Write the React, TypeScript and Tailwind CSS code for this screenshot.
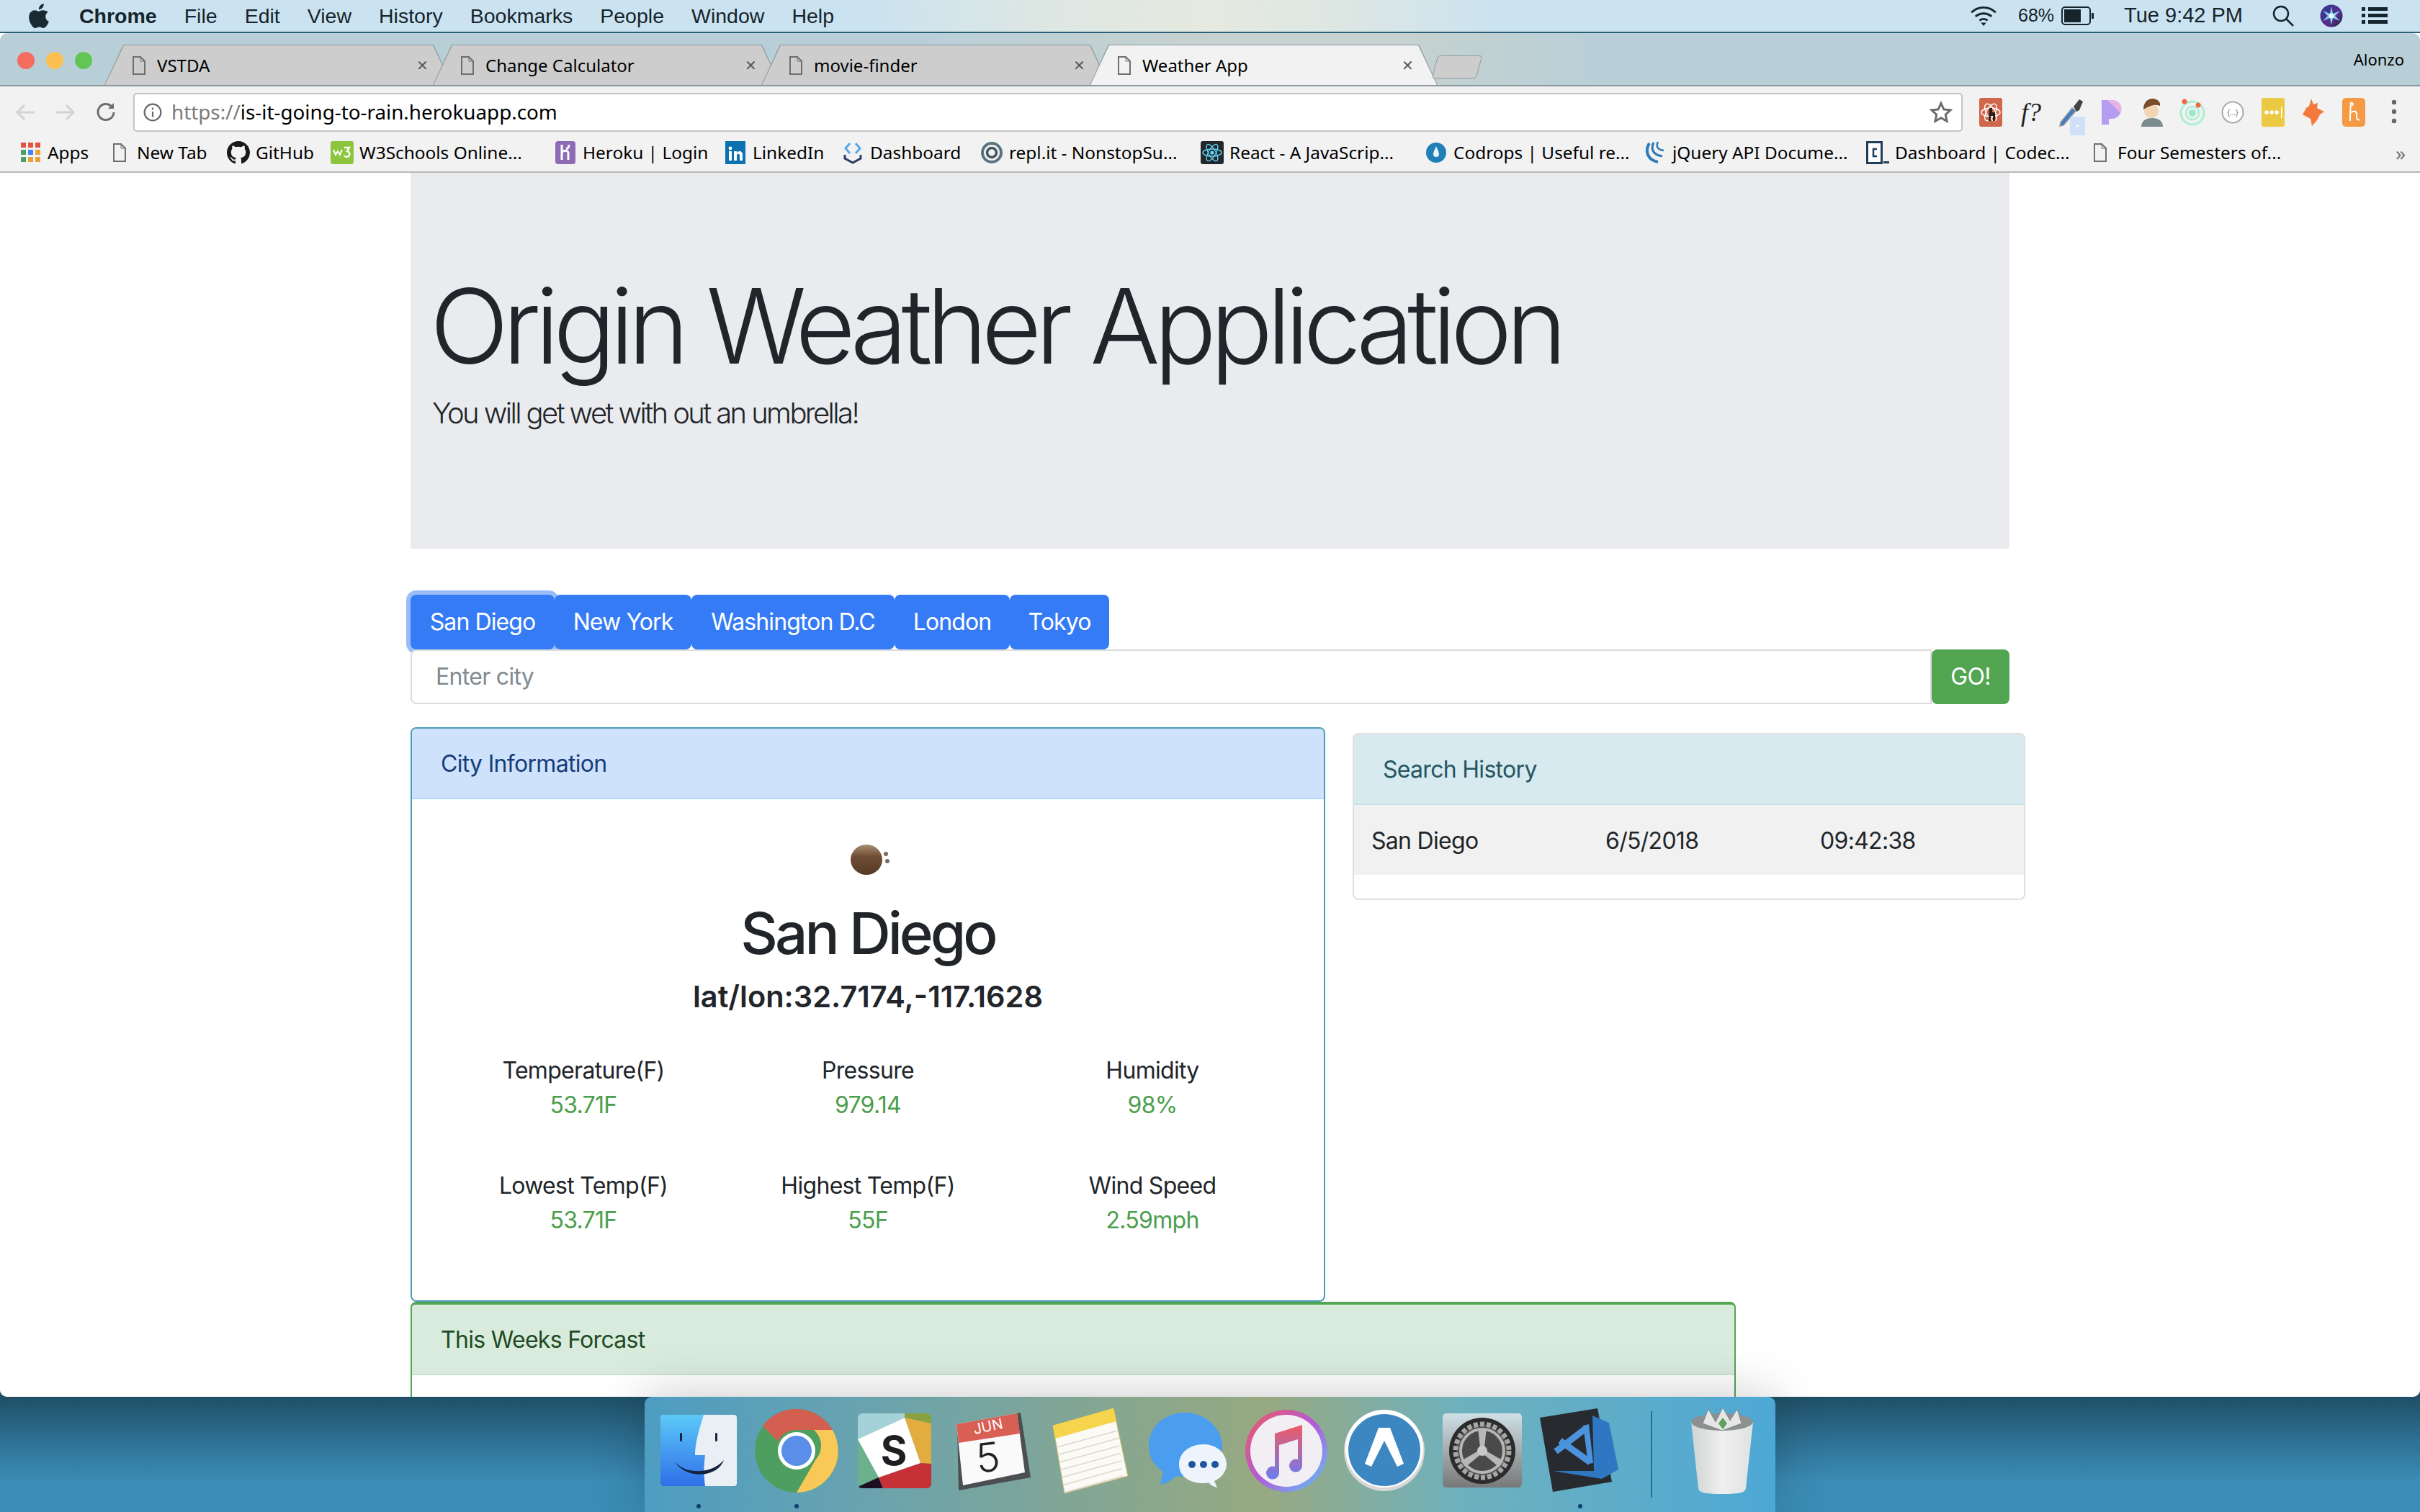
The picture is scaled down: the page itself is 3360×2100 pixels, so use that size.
import type { ReactNode } from "react";

const MENU = ["File", "Edit", "View", "History", "Bookmarks", "People", "Window", "Help"];

const CITIES = [
  { name: "San Diego", width: "w-[200px]", ring: true },
  { name: "New York", width: "w-[190px]", ring: false },
  { name: "Washington D.C", width: "w-[282px]", ring: false },
  { name: "London", width: "w-[160px]", ring: false },
  { name: "Tokyo", width: "w-[138px]", ring: false },
];

const STATS = [
  { label: "Temperature(F)", value: "53.71F" },
  { label: "Pressure", value: "979.14" },
  { label: "Humidity", value: "98%" },
  { label: "Lowest Temp(F)", value: "53.71F" },
  { label: "Highest Temp(F)", value: "55F" },
  { label: "Wind Speed", value: "2.59mph" },
];

function PageIcon() {
  return (
    <svg viewBox="0 0 18 26" className="w-[18px] h-[26px] shrink-0" fill="none" stroke="#6e6e6e" strokeWidth="2">
      <path d="M1 1h10l6 6v18H1z" />
      <path d="M11 1v6h6" strokeWidth="1" />
    </svg>
  );
}

function Tab({ title, active }: { title: string; active?: boolean }) {
  return (
    <div className="relative w-[483px] h-[56px] -ml-[27px] shrink-0 bg-[#8c9a9f] [clip-path:polygon(26px_0,457px_0,483px_100%,0_100%)]">
      <div
        className={`absolute inset-x-[1px] top-[1px] bottom-0 flex items-center pl-[38px] pr-[32px] gap-[16px] [clip-path:polygon(26px_0,455px_0,481px_100%,0_100%)] ${
          active ? "bg-[#f2f2f2]" : "bg-[#cdcdcd]"
        }`}
      >
        <PageIcon />
        <span className="flex-1 text-[24px] text-black">{title}</span>
        <span className="text-[20px] text-[#5a5a5a]">✕</span>
      </div>
    </div>
  );
}

function Bookmark({ icon, label, width }: { icon: ReactNode; label: string; width: string }) {
  return (
    <div className={`flex items-center gap-[8px] shrink-0 ${width}`}>
      <span className="w-[32px] h-[32px] flex items-center justify-center shrink-0">{icon}</span>
      <span className="text-[24.4px] whitespace-nowrap text-black">{label}</span>
    </div>
  );
}

const AppsIcon = (
  <svg viewBox="0 0 27 27" className="w-[27px] h-[27px]">
    {[0, 10, 20].map((y, r) =>
      [0, 10, 20].map((x, c) => (
        <rect
          key={`${r}${c}`}
          x={x}
          y={y}
          width="7"
          height="7"
          fill={r === 0 ? "#e5503f" : r === 1 ? (c === 0 ? "#4f9e63" : c === 1 ? "#4285f4" : "#e9a23b") : c === 0 ? "#4f9e63" : "#e9a23b"}
        />
      ))
    )}
  </svg>
);

const GithubIcon = (
  <svg viewBox="0 0 16 16" className="w-[32px] h-[32px]" fill="#1a1a1a">
    <path d="M8 0C3.58 0 0 3.58 0 8c0 3.54 2.29 6.53 5.47 7.59.4.07.55-.17.55-.38 0-.19-.01-.82-.01-1.49-2.01.37-2.53-.49-2.69-.94-.09-.23-.48-.94-.82-1.13-.28-.15-.68-.52-.01-.53.63-.01 1.08.58 1.23.82.72 1.21 1.87.87 2.33.66.07-.52.28-.87.51-1.07-1.78-.2-3.64-.89-3.64-3.95 0-.87.31-1.59.82-2.15-.08-.2-.36-1.02.08-2.12 0 0 .67-.21 2.2.82.64-.18 1.32-.27 2-.27s1.36.09 2 .27c1.53-1.04 2.2-.82 2.2-.82.44 1.1.16 1.92.08 2.12.51.56.82 1.27.82 2.15 0 3.07-1.87 3.75-3.65 3.95.29.25.54.73.54 1.48 0 1.07-.01 1.93-.01 2.2 0 .21.15.46.55.38A8.01 8.01 0 0 0 16 8c0-4.42-3.58-8-8-8z" />
  </svg>
);

const W3Icon = (
  <svg viewBox="0 0 32 32" className="w-[32px] h-[32px]">
    <rect width="32" height="32" rx="3" fill="#8cc63f" />
    <path d="M4 12l3 7 3-5 3 5 3-7" fill="none" stroke="#fff" strokeWidth="2" />
    <path d="M19 9h7l-3 5a4 4 0 1 1-4 6" fill="none" stroke="#fff" strokeWidth="2.4" />
  </svg>
);

const HerokuIcon = (
  <svg viewBox="0 0 28 32" className="w-[28px] h-[32px]">
    <rect width="28" height="32" rx="4" fill="#8d6cb5" />
    <path d="M9 5v21M9 15c5-3 9-2 9 2v9M19 5c0 3-1 5-4 6" fill="none" stroke="#fff" strokeWidth="3" />
  </svg>
);

const LinkedinIcon = (
  <svg viewBox="0 0 28 32" className="w-[28px] h-[32px]">
    <rect width="28" height="32" fill="#0a72b1" />
    <circle cx="7" cy="10" r="2.4" fill="#fff" />
    <path d="M5 14h4v13H5zM12 14h4v2c2-3 8-3 8 3v8h-4v-7c0-3-4-3-4 0v7h-4z" fill="#fff" />
  </svg>
);

const DashboardIcon = (
  <svg viewBox="0 0 30 32" className="w-[30px] h-[32px]" fill="none" strokeWidth="3">
    <path d="M11 3L5 10l6 7M19 3l6 7-6 7" stroke="#5aa9e6" />
    <path d="M4 19v5l11 6 11-6v-5" stroke="#2c3e66" />
  </svg>
);

const ReplIcon = (
  <svg viewBox="0 0 30 32" className="w-[30px] h-[32px]" fill="none">
    <circle cx="15" cy="16" r="13" stroke="#5d7480" strokeWidth="4" />
    <circle cx="15" cy="16" r="6.5" stroke="#3f5560" strokeWidth="3.5" />
  </svg>
);

const ReactIcon = (
  <svg viewBox="0 0 32 32" className="w-[32px] h-[32px]" fill="none">
    <rect width="32" height="32" rx="3" fill="#23272b" />
    <circle cx="16" cy="16" r="2.6" fill="#61dafb" />
    <g stroke="#61dafb" strokeWidth="1.3">
      <ellipse cx="16" cy="16" rx="13" ry="5" />
      <ellipse cx="16" cy="16" rx="13" ry="5" transform="rotate(60 16 16)" />
      <ellipse cx="16" cy="16" rx="13" ry="5" transform="rotate(120 16 16)" />
    </g>
  </svg>
);

const CodropsIcon = (
  <svg viewBox="0 0 28 32" className="w-[28px] h-[32px]">
    <circle cx="14" cy="16" r="14" fill="#1f80b5" />
    <path d="M14 7c-2 5-4 8-4 11a4 4 0 0 0 8 0c0-3-2-6-4-11z" fill="#fff" opacity="0.9" />
  </svg>
);

const JqueryIcon = (
  <svg viewBox="0 0 32 32" className="w-[32px] h-[32px]" fill="none" stroke="#2f7ab8">
    <path d="M8 3C2 12 4 26 20 29" strokeWidth="4" />
    <path d="M14 2c-4 8-2 17 12 19" strokeWidth="3.2" />
    <path d="M20 1c-3 6-1 11 8 12" strokeWidth="2.6" />
  </svg>
);

const CodecademyIcon = (
  <svg viewBox="0 0 32 32" className="w-[32px] h-[32px]">
    <rect x="1.5" y="1.5" width="20" height="29" fill="#fff" stroke="#1f3f5b" strokeWidth="3" />
    <path d="M15 11h-5v10h5" fill="none" stroke="#1f3f5b" strokeWidth="2.5" />
    <rect x="24" y="28" width="8" height="3" fill="#1f3f5b" />
  </svg>
);

const BOOKMARKS = [
  { icon: AppsIcon, label: "Apps", width: "w-[124px]" },
  { icon: <PageIcon />, label: "New Tab", width: "w-[165px]" },
  { icon: GithubIcon, label: "GitHub", width: "w-[144px]" },
  { icon: W3Icon, label: "W3Schools Online...", width: "w-[310px]" },
  { icon: HerokuIcon, label: "Heroku | Login", width: "w-[236px]" },
  { icon: LinkedinIcon, label: "LinkedIn", width: "w-[163px]" },
  { icon: DashboardIcon, label: "Dashboard", width: "w-[193px]" },
  { icon: ReplIcon, label: "repl.it - NonstopSu...", width: "w-[306px]" },
  { icon: ReactIcon, label: "React - A JavaScrip...", width: "w-[311px]" },
  { icon: CodropsIcon, label: "Codrops | Useful re...", width: "w-[304px]" },
  { icon: JqueryIcon, label: "jQuery API Docume...", width: "w-[309px]" },
  { icon: CodecademyIcon, label: "Dashboard | Codec...", width: "w-[309px]" },
  { icon: <PageIcon />, label: "Four Semesters of...", width: "w-[426px]" },
];

function Ext({ children }: { children: ReactNode }) {
  return <div className="w-[56px] h-[60px] shrink-0 flex items-center justify-center">{children}</div>;
}

function ExtensionIcons() {
  return (
    <div className="flex items-center ml-[11px]">
      <Ext>
        <svg viewBox="0 0 32 40" className="w-[32px] h-[40px]">
          <rect width="32" height="40" rx="3" fill="#d0664a" />
          <g fill="none" stroke="#fff" strokeWidth="1.4">
            <ellipse cx="16" cy="20" rx="13" ry="6" />
            <ellipse cx="16" cy="20" rx="13" ry="6" transform="rotate(60 16 20)" />
            <ellipse cx="16" cy="20" rx="13" ry="6" transform="rotate(120 16 20)" />
          </g>
          <path d="M14 14h4v6h4v12h-3v-7h-3v7h-3z" fill="#2a211d" />
        </svg>
      </Ext>
      <Ext>
        <span className="text-[36px] italic leading-none text-[#222] [font-family:'Liberation_Serif',serif]">f?</span>
      </Ext>
      <Ext>
        <svg viewBox="0 0 38 54" className="w-[38px] h-[54px] mt-[10px]">
          <path d="M4 36l16-20 5 4-17 20-5 1z" fill="#3f7fc0" stroke="#999" strokeWidth="1.5" />
          <path d="M22 14l8-10 5 3-5 12-4 2z" fill="#444" />
          <rect x="17" y="28" width="21" height="26" rx="2" fill="#cfe0f7" />
          <rect x="26" y="39" width="3" height="3" fill="#fff" />
        </svg>
      </Ext>
      <Ext>
        <svg viewBox="0 0 28 34" className="w-[28px] h-[34px]">
          <path d="M0 0h14a13 13 0 0 1 0 26H10v8H0z" fill="#b49cf0" />
          <path d="M8 0h8a12 12 0 0 1 10 18L8 0z" fill="#e6b3e2" />
        </svg>
      </Ext>
      <Ext>
        <svg viewBox="0 0 34 40" className="w-[34px] h-[40px]">
          <path d="M2 40c0-8 6-12 15-12s15 4 15 12z" fill="#7c8c8e" />
          <circle cx="16" cy="18" r="10" fill="#f3d4b4" />
          <path d="M5 16C5 5 12 0 19 1c7 1 10 6 9 10-8-3-14 0-23 5z" fill="#7a4c2c" />
        </svg>
      </Ext>
      <Ext>
        <svg viewBox="0 0 36 40" className="w-[36px] h-[40px]" fill="none">
          <circle cx="18" cy="21" r="16" stroke="#a8f0d4" strokeWidth="3" />
          <circle cx="18" cy="21" r="9" stroke="#a8f0d4" strokeWidth="2.5" />
          <circle cx="18" cy="21" r="5" fill="#9ce8c8" />
          <circle cx="7" cy="5" r="3.5" fill="#f0683e" />
          <circle cx="26" cy="10" r="3.5" fill="#f0683e" />
        </svg>
      </Ext>
      <Ext>
        <svg viewBox="0 0 32 40" className="w-[32px] h-[40px]">
          <circle cx="16" cy="20" r="14.5" fill="#fff" stroke="#aaa" strokeWidth="2" />
          <text x="16" y="24" textAnchor="middle" fontSize="10" fill="#777">{"{...}"}</text>
        </svg>
      </Ext>
      <Ext>
        <svg viewBox="0 0 32 40" className="w-[32px] h-[40px]">
          <rect width="32" height="40" rx="3" fill="#ecc943" />
          <circle cx="7" cy="20" r="2.7" fill="#fff" />
          <circle cx="14" cy="20" r="2.7" fill="#fff" />
          <circle cx="21" cy="20" r="2.7" fill="#fff" />
          <rect x="27" y="12" width="1.6" height="16" fill="#fff" />
        </svg>
      </Ext>
      <Ext>
        <svg viewBox="0 0 32 38" className="w-[32px] h-[38px]">
          <path d="M13 0l3 8 6-2-1 7 10 5-6 4-4 8-7 8-2-10-11-6 5-9 4-3z" fill="#f47a3c" />
        </svg>
      </Ext>
      <Ext>
        <svg viewBox="0 0 32 40" className="w-[32px] h-[40px]">
          <rect width="32" height="40" rx="5" fill="#f49a44" />
          <path d="M12 8c-1 8-1 16-1 24M11 21c3-3 9-4 9 1v5c0 3 2 4 4 3M11 8c2-3 5 0 3 3" fill="none" stroke="#fff" strokeWidth="2" />
        </svg>
      </Ext>
      <Ext>
        <svg viewBox="0 0 8 40" className="w-[8px] h-[40px]" fill="#666">
          <circle cx="4" cy="6" r="3.2" />
          <circle cx="4" cy="19" r="3.2" />
          <circle cx="4" cy="32" r="3.2" />
        </svg>
      </Ext>
    </div>
  );
}

function Finder() {
  return (
    <svg viewBox="0 0 106 100" className="w-[106px] h-[100px]">
      <defs>
        <linearGradient id="finderL" x1="0" y1="0" x2="0" y2="1">
          <stop offset="0" stopColor="#5cc9f8" />
          <stop offset="1" stopColor="#2f6fe8" />
        </linearGradient>
      </defs>
      <rect width="106" height="99" rx="4" fill="#e9eff5" />
      <path d="M4 0h56c-6 20-12 38-12 56h14c-2 14 -2 28 0 43H4a4 4 0 0 1-4-4V4a4 4 0 0 1 4-4z" fill="url(#finderL)" />
      <rect x="27" y="25" width="3" height="12" rx="1.5" fill="#14233f" />
      <rect x="76" y="25" width="3" height="12" rx="1.5" fill="#14233f" />
      <path d="M20 65c14 18 50 18 68-2-10 26-54 26-68 2z" fill="#14233f" />
    </svg>
  );
}

function ChromeDock() {
  return (
    <svg viewBox="0 0 118 118" className="w-[118px] h-[118px]">
      <circle cx="59" cy="59" r="58" fill="#4e9e5f" />
      <path d="M59 1a58 58 0 0 1 50 29H59a29 29 0 0 0-26 16L12 24A58 58 0 0 1 59 1z" fill="#d25f4f" />
      <path d="M109 30a58 58 0 0 1-50 87l26-45a29 29 0 0 0-2-42z" fill="#f8c957" />
      <circle cx="59" cy="59" r="26" fill="#fff" />
      <circle cx="59" cy="59" r="21" fill="#5a8ee8" />
    </svg>
  );
}

function Slack() {
  return (
    <svg viewBox="0 0 102 104" className="w-[102px] h-[104px]">
      <defs>
        <clipPath id="slackBox">
          <rect width="102" height="104" rx="6" />
        </clipPath>
      </defs>
      <g clipPath="url(#slackBox)">
        <path d="M0 0h65v6L0 36z" fill="#a4d2d8" />
        <path d="M65 0h37v14L65 6z" fill="#8aa13f" />
        <path d="M65 6l37 8v56l-15-1z" fill="#e2ad3e" />
        <path d="M0 36l29 53L0 102z" fill="#6ab18c" />
        <path d="M0 102l29-13 6 15H0z" fill="#1c0f24" />
        <path d="M29 89l58-20 15 1v34H35z" fill="#c63138" />
        <path d="M0 36L65 6l22 63-58 20z" fill="#fff" />
      </g>
      <text x="50" y="72" textAnchor="middle" fontSize="56" fontWeight="700" fill="#1e1f22" fontFamily="Inter, sans-serif">S</text>
    </svg>
  );
}

function Calendar() {
  return (
    <div className="relative w-[106px] h-[110px]">
      <svg viewBox="0 0 106 110" className="absolute inset-0 w-full h-full">
        <path d="M4 20l88-18 14 90-100 18z" fill="#4b4f52" />
        <path d="M3 18l84-15 11 82-86 18z" fill="#fafafa" />
        <path d="M3 18l84-15 4 28-85 13z" fill="#d95f55" />
      </svg>
      <span className="absolute left-[26px] top-[6px] text-[20px] text-white -rotate-12">JUN</span>
      <span className="absolute left-[30px] top-[36px] text-[56px] leading-none text-[#222] font-light -rotate-6">5</span>
    </div>
  );
}

function Notes() {
  return (
    <svg viewBox="0 0 104 118" className="w-[104px] h-[118px]">
      <path d="M0 24L84 0l20 94-88 24z" fill="#fbfaf5" stroke="#d0b76a" strokeWidth="1" />
      <path d="M0 24L84 0l4 18L3 42z" fill="#f6d44c" />
      {[0, 1, 2, 3, 4, 5, 6].map((i) => (
        <path key={i} d={`M${5 + i * 1.8} ${54 + i * 10.5}L${90 + i * 1.2} ${31 + i * 10.5}`} stroke="#d8d8d0" strokeWidth="1.5" />
      ))}
    </svg>
  );
}

function Messages() {
  return (
    <svg viewBox="0 0 110 106" className="w-[110px] h-[106px]">
      <path d="M50 0C22 0 0 20 0 46c0 16 8 28 20 36l-4 18c8-2 16-6 22-12 6 1 8 1 14 1 26 0 50-20 50-43S80 0 50 0z" fill="#4b9df0" />
      <path d="M76 44c-20 0-34 12-34 28s14 26 34 26c2 0 5 0 7-1 3 4 8 6 12 7l-4-9c10-5 17-13 17-23 0-16-14-28-32-28z" fill="#eef4fb" />
      <circle cx="60" cy="72" r="5" fill="#20559f" />
      <circle cx="76" cy="72" r="5" fill="#20559f" />
      <circle cx="92" cy="72" r="5" fill="#20559f" />
    </svg>
  );
}

function ITunes() {
  return (
    <svg viewBox="0 0 116 116" className="w-[116px] h-[116px]">
      <defs>
        <linearGradient id="itunesRing" x1="0" y1="0" x2="1" y2="1">
          <stop offset="0" stopColor="#f05a5a" />
          <stop offset="0.5" stopColor="#b25ad8" />
          <stop offset="1" stopColor="#5ac8fa" />
        </linearGradient>
        <linearGradient id="itunesNote" x1="0" y1="0" x2="0" y2="1">
          <stop offset="0" stopColor="#ef5a62" />
          <stop offset="1" stopColor="#6d7cf3" />
        </linearGradient>
      </defs>
      <circle cx="58" cy="58" r="57" fill="url(#itunesRing)" />
      <circle cx="58" cy="58" r="50" fill="#f1eef4" />
      <path d="M42 34l38-12v56a9 9 0 1 1-6-8V42L48 50v38a9 9 0 1 1-6-8z" fill="url(#itunesNote)" />
    </svg>
  );
}

function Expo() {
  return (
    <svg viewBox="0 0 112 114" className="w-[112px] h-[114px]">
      <circle cx="56" cy="57" r="56" fill="#d7d7d7" />
      <circle cx="56" cy="54" r="54" fill="#fff" />
      <circle cx="56" cy="56" r="50" fill="#3c87c2" />
      <path d="M48 25h16l19 50-9 4-18-36-18 36-9-4z" fill="#fff" />
    </svg>
  );
}

function Settings() {
  return (
    <svg viewBox="0 0 110 104" className="w-[110px] h-[104px]">
      <defs>
        <linearGradient id="prefBg" x1="0" y1="0" x2="0" y2="1">
          <stop offset="0" stopColor="#cfe0e6" />
          <stop offset="1" stopColor="#787878" />
        </linearGradient>
      </defs>
      <rect width="110" height="103" rx="5" fill="url(#prefBg)" />
      <circle cx="55" cy="52" r="46" fill="#2b2b2b" />
      <circle cx="55" cy="52" r="37" fill="#4a4a4a" stroke="#a6a6a6" strokeWidth="7" strokeDasharray="6 3" />
      <circle cx="55" cy="52" r="30" fill="none" stroke="#b5b5b5" strokeWidth="4" />
      <path d="M55 52L52 24h6zM55 52l26 15-3 4zM55 52L29 67l3 4z" stroke="#b8b8b8" strokeWidth="5" fill="#b8b8b8" />
      <circle cx="55" cy="52" r="7" fill="#c9c9c9" />
    </svg>
  );
}

function VSCode() {
  return (
    <svg viewBox="0 0 112 118" className="w-[112px] h-[118px]">
      <path d="M0 13L80 0l20 102-82 14z" fill="#272a2e" />
      <path d="M73 10l23 10 13 65-23 13-68-11 57 0z" fill="#2f77c2" />
      <path d="M65 27L22 60M28 45l42 30" fill="none" stroke="#4c93dd" strokeWidth="9" />
      <path d="M60 24l8-2 6 54-7 1z" fill="#4c93dd" />
    </svg>
  );
}

function Trash() {
  return (
    <svg viewBox="0 0 94 120" className="w-[94px] h-[120px]">
      <defs>
        <linearGradient id="trashBody" x1="0" y1="0" x2="1" y2="0">
          <stop offset="0" stopColor="#cfd3d4" />
          <stop offset="0.5" stopColor="#f0f0ee" />
          <stop offset="1" stopColor="#dfe2e2" />
        </linearGradient>
      </defs>
      <path d="M4 20h86l-10 92c-1 6-8 8-33 8s-32-2-33-8z" fill="url(#trashBody)" />
      <ellipse cx="47" cy="20" rx="43" ry="12" fill="#8b9091" />
      <path d="M20 22l8-20 10 18 10-20 10 18 10-16 6 20-27 10z" fill="#e6e6e6" stroke="#888" strokeWidth="1" />
      <path d="M42 22l6-8 6 8-6 8z" fill="#5e9e5e" />
    </svg>
  );
}

const DOCK = [
  { icon: <Finder />, running: true },
  { icon: <ChromeDock />, running: true },
  { icon: <Slack />, running: false },
  { icon: <Calendar />, running: false },
  { icon: <Notes />, running: false },
  { icon: <Messages />, running: false },
  { icon: <ITunes />, running: false },
  { icon: <Expo />, running: false },
  { icon: <Settings />, running: false },
  { icon: <VSCode />, running: true },
];

function DockItem({ icon, running }: { icon: ReactNode; running: boolean }) {
  return (
    <div className="w-[136px] h-full flex flex-col items-center shrink-0">
      <div className="h-[149px] flex items-center justify-center">{icon}</div>
      {running && <span className="w-[6px] h-[6px] rounded-full bg-[#0c3f6b]" />}
    </div>
  );
}

function Card({
  title,
  frame,
  head,
  className,
  children,
}: {
  title: string;
  frame: string;
  head: string;
  className: string;
  children?: ReactNode;
}) {
  return (
    <div className={`rounded-[8px] border-[2px] overflow-hidden bg-white ${frame} ${className}`}>
      <div className={`h-[98px] flex items-center px-[40px] pt-[2px] border-b-[2px] text-[32px] ${head}`}>{title}</div>
      {children}
    </div>
  );
}

export default function App() {
  return (
    <div className="w-[3360px] h-[2100px] overflow-hidden flex flex-col bg-[linear-gradient(180deg,#1f4f66_92.4%,#2f7397_95.5%,#3b8cb6_98%)] text-[#212529] [font-family:Inter,'Liberation_Sans',sans-serif]">
      {/* menu bar */}
      <div className="h-[46px] shrink-0 flex items-center justify-between border-b-[2px] border-[#2a6079] bg-[linear-gradient(90deg,#cbe3f0_0%,#cbe3f0_36%,#dbe6e4_42%,#e6eae0_50%,#dbe6e4_56%,#cbe3f0_62%,#cbe3f0_100%)] text-[28.5px] text-[#16242c] [font-family:'Liberation_Sans',sans-serif]">
        <div className="flex items-center">
          <svg viewBox="0 0 814 1000" className="w-[28px] h-[34px] ml-[40px] mr-[42px]" fill="#1a2a33">
            <path d="M788 341c-6 4-108 62-108 190 0 148 130 201 134 202-1 3-21 72-69 142-43 62-88 124-156 124s-86-40-164-40c-77 0-104 41-167 41s-106-57-156-127C44 791 0 670 0 555c0-185 120-283 239-283 63 0 115 41 155 41 38 0 97-44 169-44 27 0 125 3 225 72zM554 168c31-37 53-88 53-139 0-7-1-14-2-20-51 2-111 34-148 76-29 32-55 83-55 135 0 8 1 15 2 18 3 0 8 1 13 1 45 0 103-31 137-71z" />
          </svg>
          <span className="font-bold mr-[38px]">Chrome</span>
          <div className="flex gap-[38px]">
            {MENU.map((m) => (
              <span key={m}>{m}</span>
            ))}
          </div>
        </div>
        <div className="flex items-center pr-[45px]">
          <svg viewBox="0 0 40 32" className="w-[40px] h-[30px]" fill="none" stroke="#16242c" strokeWidth="3">
            <path d="M2 11c10-10 26-10 36 0M8 17c7-6 17-6 24 0M14 23c3-3 9-3 12 0" />
            <path d="M20 31l-4-5h8z" fill="#16242c" stroke="none" />
          </svg>
          <span className="ml-[28px] text-[25px]">68%</span>
          <svg viewBox="0 0 46 26" className="w-[46px] h-[26px] ml-[10px]">
            <rect x="1" y="1" width="39" height="24" rx="4" fill="none" stroke="#16242c" strokeWidth="2" />
            <rect x="4" y="4" width="23" height="18" fill="#16242c" />
            <rect x="42" y="9" width="3" height="8" fill="#16242c" />
          </svg>
          <span className="ml-[41px] text-[29px]">Tue 9:42 PM</span>
          <svg viewBox="0 0 30 30" className="w-[30px] h-[30px] ml-[41px]" fill="none" stroke="#16242c" strokeWidth="2.5">
            <circle cx="12" cy="12" r="10" />
            <path d="M19 19l10 10" />
          </svg>
          <svg viewBox="0 0 32 32" className="w-[32px] h-[32px] ml-[36px]">
            <defs>
              <linearGradient id="siri" x1="0" y1="0" x2="1" y2="1">
                <stop offset="0" stopColor="#2a3b8f" />
                <stop offset="0.6" stopColor="#5a2c8c" />
                <stop offset="1" stopColor="#1d1f4a" />
              </linearGradient>
            </defs>
            <circle cx="16" cy="16" r="15.5" fill="url(#siri)" />
            <path d="M16 3l2 10 10-4-7 7 7 7-10-4-2 10-2-10-10 4 7-7-7-7 10 4z" fill="#7fd4ea" />
            <circle cx="16" cy="16" r="3.5" fill="#e9f5fb" />
          </svg>
          <svg viewBox="0 0 36 28" className="w-[36px] h-[28px] ml-[26px]" fill="#16242c">
            <rect x="0" y="2" width="5" height="5" />
            <rect x="9" y="2" width="27" height="5" />
            <rect x="0" y="11" width="5" height="5" />
            <rect x="9" y="11" width="27" height="5" />
            <rect x="0" y="20" width="5" height="5" />
            <rect x="9" y="20" width="27" height="5" />
          </svg>
        </div>
      </div>

      {/* browser window */}
      <div className="h-[1894px] shrink-0 rounded-b-[10px] overflow-hidden flex flex-col bg-white [font-family:'Noto_Sans',sans-serif]">
        <div className="h-[74px] shrink-0 flex items-end border-b-[2px] border-[#8c9a9f] rounded-t-[10px] bg-[linear-gradient(90deg,#b9cfd8_0%,#b9cfd8_38%,#c6d2cf_50%,#c6d2cf_58%,#b9cfd8_66%,#b9cfd8_100%)]">
          <div className="flex items-center gap-[16px] pl-[24px] w-[172px] shrink-0 self-center mt-[4px]">
            <span className="w-[24px] h-[24px] rounded-full bg-[#f46c60] shrink-0" />
            <span className="w-[24px] h-[24px] rounded-full bg-[#fbc04f] shrink-0" />
            <span className="w-[24px] h-[24px] rounded-full bg-[#62c654] shrink-0" />
          </div>
          <Tab title="VSTDA" />
          <Tab title="Change Calculator" />
          <Tab title="movie-finder" />
          <Tab title="Weather App" active />
          <div className="w-[62px] h-[32px] mb-[9px] -ml-[4px] rounded-[4px] border border-[#8c9a9f] bg-[#cdcdcd] -skew-x-[15deg]" />
          <span className="ml-auto self-center pr-[22px] text-[22px] text-black">Alonzo</span>
        </div>

        <div className="h-[72px] shrink-0 flex items-center bg-[#f2f2f2]">
          <div className="flex items-center gap-[26px] w-[185px] shrink-0 pl-[20px]">
            <svg viewBox="0 0 30 30" className="w-[30px] h-[30px]" fill="none" stroke="#d2d2d2" strokeWidth="3">
              <path d="M28 15H4M14 5L4 15l10 10" />
            </svg>
            <svg viewBox="0 0 30 30" className="w-[30px] h-[30px]" fill="none" stroke="#d2d2d2" strokeWidth="3">
              <path d="M2 15h24M16 5l10 10-10 10" />
            </svg>
            <svg viewBox="0 0 30 30" className="w-[30px] h-[30px]" fill="none" stroke="#6e6e6e" strokeWidth="3">
              <path d="M26 15a11 11 0 1 1-3-8" />
              <path d="M26 2v8h-8" fill="#6e6e6e" stroke="none" />
            </svg>
          </div>
          <div className="w-[2540px] h-[54px] shrink-0 flex items-center rounded-[5px] border-[2px] border-[#c4c4c4] bg-white pl-[12px] pr-[12px]">
            <svg viewBox="0 0 24 24" className="w-[26px] h-[26px]" fill="none" stroke="#666" strokeWidth="2">
              <circle cx="12" cy="12" r="10.5" />
              <path d="M12 11v7M12 6v2.5" />
            </svg>
            <span className="ml-[13px] text-[27.8px] text-[#7a7a7a]">https://</span>
            <span className="text-[27.8px] text-black">is-it-going-to-rain.herokuapp.com</span>
            <svg viewBox="0 0 24 24" className="w-[32px] h-[32px] ml-auto" fill="none" stroke="#6a6a6a" strokeWidth="2.2">
              <path d="M12 2.5l2.9 6.4 6.9.8-5.1 4.7 1.4 6.9-6.1-3.5-6.1 3.5 1.4-6.9-5.1-4.7 6.9-.8z" />
            </svg>
          </div>
          <ExtensionIcons />
        </div>

        <div className="h-[48px] shrink-0 flex items-center pl-[26px] pb-[6px] border-b-[2px] border-[#b8b8b8] bg-[#f2f2f2]">
          {BOOKMARKS.map((b) => (
            <Bookmark key={b.label} icon={b.icon} label={b.label} width={b.width} />
          ))}
          <span className="text-[28px] leading-none text-[#777]">»</span>
        </div>

        {/* page */}
        <div className="flex-1 min-h-0 pl-[570px] bg-white tracking-[-0.7px] [font-family:Inter,'Liberation_Sans',sans-serif]">
          <div className="w-[2220px] h-[522px] flex flex-col justify-center pl-[27px] pb-[31px] bg-[#eaebef]">
            <h1 className="text-[144px] font-light leading-[1.2] tracking-[-8.3px] text-[#212529] mb-[4px]">Origin Weather Application</h1>
            <p className="text-[40px] font-light leading-[1.5] tracking-[-2.6px] pl-[3px]">You will get wet with out an umbrella!</p>
          </div>

          <div className="flex mt-[64px] h-[76px]">
            {CITIES.map((c) => (
              <div
                key={c.name}
                className={`h-full flex items-center justify-center rounded-[8px] bg-[#367bf6] text-[32px] text-white tracking-[-0.9px] ${c.width} ${
                  c.ring ? "shadow-[0_0_0_6px_rgba(54,123,246,0.5)]" : ""
                }`}
              >
                {c.name}
              </div>
            ))}
          </div>

          <div className="flex w-[2220px] h-[76px]">
            <div className="flex-1 flex items-center pl-[33px] border-[2px] border-[#dcdcdc] rounded-l-[8px] bg-white text-[32px] text-[#808a91]">
              Enter city
            </div>
            <div className="w-[108px] flex items-center justify-center rounded-[8px] bg-[#52a551] text-[32px] text-white">GO!</div>
          </div>

          <div className="flex items-start gap-[38px] mt-[32px] text-[32px]">
            <Card
              title="City Information"
              frame="border-[#4b9cb5]"
              head="bg-[#cfe2fb] border-[#b8d6fb] text-[#163d78]"
              className="w-[1270px] h-[798px] shrink-0"
            >
              <div className="flex flex-col items-center pt-[60px]">
                <svg viewBox="0 0 60 48" className="w-[60px] h-[48px] ml-[2px]">
                  <defs>
                    <linearGradient id="wx" x1="0" y1="0" x2="0" y2="1">
                      <stop offset="0" stopColor="#a88e72" />
                      <stop offset="0.4" stopColor="#6e4d33" />
                      <stop offset="1" stopColor="#553a26" />
                    </linearGradient>
                  </defs>
                  <ellipse cx="27" cy="24" rx="22" ry="21" fill="url(#wx)" />
                  <circle cx="54" cy="16" r="3" fill="#7b6a5b" />
                  <circle cx="56" cy="26" r="3" fill="#7b6a5b" />
                </svg>
                <h2 className="mt-[30px] text-[80px] leading-[1.2] font-medium tracking-[-4px]">San Diego</h2>
                <h3 className="mt-[16px] text-[41.5px] leading-[1.2] font-semibold tracking-[0px]">lat/lon:32.7174,-117.1628</h3>
                <div className="grid grid-cols-3 w-[1185px] mt-[53px] gap-y-[64px] text-center">
                  {STATS.map((s) => (
                    <div key={s.label}>
                      <div className="leading-[48px]">{s.label}</div>
                      <div className="leading-[48px] text-[#4b9e4b]">{s.value}</div>
                    </div>
                  ))}
                </div>
              </div>
            </Card>

            <Card
              title="Search History"
              frame="border-[#dfdfdf]"
              head="bg-[#d6eaf0] border-[#c6e0e8] text-[#265561]"
              className="w-[934px] h-[232px] mt-[8px] shrink-0"
            >
              <div className="h-[97px] flex items-center pt-[2px] bg-[#f1f1f1]">
                <span className="w-[349px] pl-[24px]">San Diego</span>
                <span className="w-[298px]">6/5/2018</span>
                <span>09:42:38</span>
              </div>
            </Card>
          </div>

          <Card
            title="This Weeks Forcast"
            frame="border-[#52a551] border-t-[4px]"
            head="bg-[#d9ebdc] border-[#cde3d1] text-[#204b25]"
            className="w-[1840px] h-[300px] rounded-b-none text-[32px]"
          />
        </div>
      </div>

      {/* dock */}
      <div className="relative h-[160px] shrink-0 w-[1570px] ml-[895px] flex pl-[7px] rounded-t-[10px] shadow-[0_0_70px_rgba(0,0,0,0.22)] bg-[linear-gradient(90deg,#4d9dc2_0%,#6aa3ae_20%,#8ba78b_45%,#97a981_55%,#6fb1bd_72%,#4da8d5_100%)]">
        {DOCK.map((d, i) => (
          <DockItem key={i} icon={d.icon} running={d.running} />
        ))}
        <div className="w-[2px] h-[120px] mt-[20px] ml-[30px] shrink-0 bg-[#2b6f94]" />
        <div className="w-[136px] h-[149px] ml-[29px] flex items-center justify-center shrink-0">
          <Trash />
        </div>
      </div>
    </div>
  );
}
